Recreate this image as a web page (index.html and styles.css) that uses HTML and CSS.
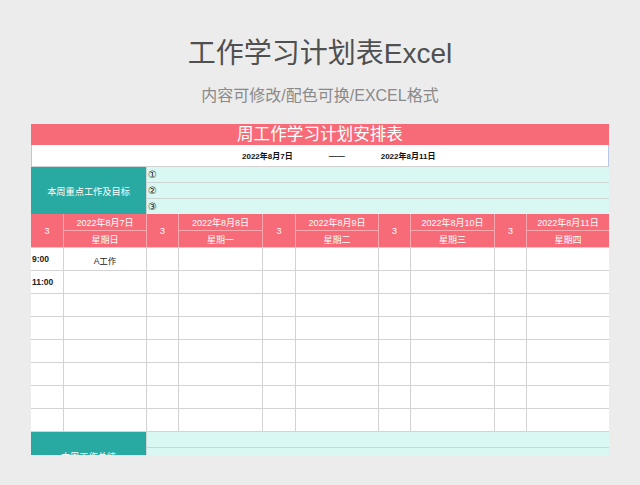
FILE: index.html
```html
<!DOCTYPE html>
<html lang="zh">
<head>
<meta charset="utf-8">
<title>工作学习计划表Excel</title>
<link rel="stylesheet" href="styles.css">
</head>
<body>
<div class="page">
  <header class="hero">
    <h1 class="hero-title">工作学习计划表Excel</h1>
    <p class="hero-sub">内容可修改/配色可换/EXCEL格式</p>
  </header>

  <section class="sheet">
    <div class="sheet-title">周工作学习计划安排表</div>
    <div class="sheet-dates">
      <span>2022年8月7日</span>
      <span>——</span>
      <span>2022年8月11日</span>
    </div>

    <div class="block">
      <div class="block-head">本周重点工作及目标</div>
      <div class="block-line">①</div>
      <div class="block-line">②</div>
      <div class="block-line">③</div>
    </div>

    <div class="days">
      <div class="num">3</div><div class="date">2022年8月7日</div>
      <div class="num">3</div><div class="date">2022年8月8日</div>
      <div class="num">3</div><div class="date">2022年8月9日</div>
      <div class="num">3</div><div class="date">2022年8月10日</div>
      <div class="num">3</div><div class="date">2022年8月11日</div>
      <div class="wd">星期日</div>
      <div class="wd">星期一</div>
      <div class="wd">星期二</div>
      <div class="wd">星期三</div>
      <div class="wd">星期四</div>
    </div>

    <div class="grid">
      <div class="cell time">9:00</div><div class="cell task">A工作</div><div class="cell"></div><div class="cell"></div><div class="cell"></div><div class="cell"></div><div class="cell"></div><div class="cell"></div><div class="cell"></div><div class="cell"></div>
      <div class="cell time">11:00</div><div class="cell"></div><div class="cell"></div><div class="cell"></div><div class="cell"></div><div class="cell"></div><div class="cell"></div><div class="cell"></div><div class="cell"></div><div class="cell"></div>
      <div class="cell"></div><div class="cell"></div><div class="cell"></div><div class="cell"></div><div class="cell"></div><div class="cell"></div><div class="cell"></div><div class="cell"></div><div class="cell"></div><div class="cell"></div>
      <div class="cell"></div><div class="cell"></div><div class="cell"></div><div class="cell"></div><div class="cell"></div><div class="cell"></div><div class="cell"></div><div class="cell"></div><div class="cell"></div><div class="cell"></div>
      <div class="cell"></div><div class="cell"></div><div class="cell"></div><div class="cell"></div><div class="cell"></div><div class="cell"></div><div class="cell"></div><div class="cell"></div><div class="cell"></div><div class="cell"></div>
      <div class="cell"></div><div class="cell"></div><div class="cell"></div><div class="cell"></div><div class="cell"></div><div class="cell"></div><div class="cell"></div><div class="cell"></div><div class="cell"></div><div class="cell"></div>
      <div class="cell"></div><div class="cell"></div><div class="cell"></div><div class="cell"></div><div class="cell"></div><div class="cell"></div><div class="cell"></div><div class="cell"></div><div class="cell"></div><div class="cell"></div>
      <div class="cell"></div><div class="cell"></div><div class="cell"></div><div class="cell"></div><div class="cell"></div><div class="cell"></div><div class="cell"></div><div class="cell"></div><div class="cell"></div><div class="cell"></div>
    </div>

    <div class="block">
      <div class="block-head">本周工作总结</div>
      <div class="block-line"></div>
      <div class="block-line"></div>
      <div class="block-line"></div>
    </div>
  </section>
</div>
</body>
</html>
```

FILE: styles.css
```css
html, body {
  margin: 0;
  padding: 0;
  background: #ececec;
}

body {
  font-family: "Liberation Sans", "Noto Sans CJK SC", sans-serif;
  color: #000;
}

.page {
  height: 455px;
  overflow: hidden;
}

.hero {
  padding-top: 34px;
  text-align: center;
}

.hero-title {
  margin: 0;
  font-size: 28px;
  line-height: 40px;
  font-weight: normal;
  color: #505050;
}

.hero-sub {
  margin: 11px 0 0;
  font-size: 16px;
  line-height: 22px;
  color: #8a8a8a;
}

.sheet {
  width: 578px;
  margin: 17px auto 0;
}

.sheet-title {
  height: 21px;
  background: #f76b78;
  color: #fff;
  font-size: 16.6px;
  line-height: 21px;
  text-align: center;
}

.sheet-dates {
  box-sizing: border-box;
  height: 22px;
  background: #fff;
  border-left: 1px solid #b7c7e6;
  border-right: 1px solid #b7c7e6;
  border-bottom: 1px solid #d2d2d2;
  display: flex;
  align-items: center;
  gap: 36px;
  padding-left: 210px;
  font-size: 8px;
  font-weight: bold;
  color: #111;
}

.block {
  display: grid;
  grid-template-columns: 115px 1fr;
  grid-template-rows: 15px 15px 15px;
  gap: 1px;
  background: #cbd5d3;
}

.block-head {
  grid-row: 1 / 4;
  background: #28a9a1;
  color: #fff;
  font-size: 9.2px;
  display: flex;
  align-items: center;
  justify-content: center;
}

.block-line {
  background: #d9f7f3;
  font-family: "DejaVu Sans", sans-serif;
  font-size: 10px;
  color: #222;
  display: flex;
  align-items: center;
  padding-left: 1px;
}

.days {
  display: grid;
  grid-template-columns: 32px 82px 31px 83px 32px 82px 31px 83px 31px 82px;
  grid-template-rows: 16px 16px;
  gap: 1px;
  background: #f9a8b0;
}

.days > div {
  background: #f76b78;
  color: #fff;
  font-size: 9px;
  display: flex;
  align-items: center;
  justify-content: center;
}

.days .num {
  grid-row: span 2;
}

.grid {
  display: grid;
  grid-template-columns: 32px 82px 31px 83px 32px 82px 31px 83px 31px 82px;
  grid-template-rows: repeat(8, 22px);
  gap: 1px;
  padding: 1px 0;
  background: #d3d3d3;
}

.cell {
  background: #fff;
  font-size: 8.5px;
  display: flex;
  align-items: center;
}

.time {
  padding-left: 1px;
  font-weight: bold;
  color: #222;
  align-items: flex-start;
  padding-top: 6px;
  box-sizing: border-box;
}

.task {
  justify-content: center;
  align-items: flex-start;
  padding-top: 6px;
  box-sizing: border-box;
  color: #222;
}
```
